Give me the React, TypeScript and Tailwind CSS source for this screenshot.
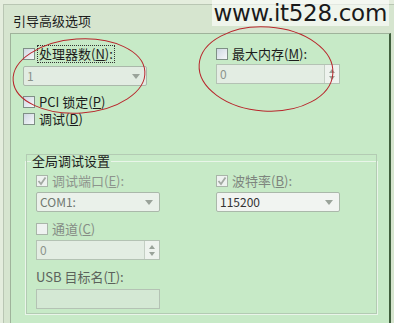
const font = { fontFamily: '"Noto Sans CJK SC", "Noto Sans", sans-serif' };

function Box({ checked, dim }: { checked?: boolean; dim?: boolean }) {
  return (
    <span
      className={`w-[12px] h-[12px] shrink-0 border flex items-center justify-center ${
        dim ? "border-[#a9b5a9] bg-[#eef2f0]" : "border-[#7f8f86] bg-gradient-to-br from-[#cfd8e2] to-[#f6f8fa]"
      }`}
    >
      {checked && (
        <svg width="10" height="10" viewBox="0 0 10 10">
          <path d="M1.5 5 L4 8 L8.5 1.5" stroke="#a3aaa3" strokeWidth="1.8" fill="none" />
        </svg>
      )}
    </span>
  );
}

function Check({ label, hot, tail, checked, dim, focus, color = "text-[#1c1c1c]" }: {
  label: string; hot: string; tail?: string; checked?: boolean; dim?: boolean; focus?: boolean; color?: string;
}) {
  return (
    <div className={`flex items-center h-[16px] gap-[3px] text-[13px] leading-[16px] ${color}`}>
      <Box checked={checked} dim={dim} />
      <span className={`px-[1px] ${focus ? "outline outline-1 outline-dotted outline-[#333]" : ""}`}>
        {label}(<u>{hot}</u>){tail}
      </span>
    </div>
  );
}

function Arrow() {
  return (
    <svg width="8" height="5" viewBox="0 0 8 5">
      <path d="M0 0 L8 0 L4 5 Z" fill="#9aa39a" />
    </svg>
  );
}

function Select({ value, bg, text }: { value: string; bg: string; text: string }) {
  return (
    <div className={`w-[124px] h-[20px] border border-[#aab8aa] rounded-[2px] flex items-center justify-between pl-[3px] pr-[6px] text-[12px] ${bg} ${text}`}>
      <span>{value}</span>
      <Arrow />
    </div>
  );
}

function Spin({ value }: { value: string }) {
  return (
    <div className="w-[124px] h-[20px] border border-[#b4c2b4] flex items-center justify-between bg-[#e3ede3] text-[12px] text-[#8c948c]">
      <span className="pl-[3px]">{value}</span>
      <div className="w-[15px] h-[18px] border-l border-[#c4cfc4] bg-[#eef3ee] flex flex-col items-center justify-center gap-[3px]">
        <svg width="6" height="4" viewBox="0 0 6 4"><path d="M0 4 L6 4 L3 0 Z" fill="#9aa39a" /></svg>
        <svg width="6" height="4" viewBox="0 0 6 4"><path d="M0 0 L6 0 L3 4 Z" fill="#9aa39a" /></svg>
      </div>
    </div>
  );
}

export default function App() {
  return (
    <div className="relative w-[394px] h-[323px] overflow-hidden bg-[#e4eddd]" style={font}>
      <div className="mt-[4px] ml-[3px] h-[330px] border-l border-t border-[#b9c6b3] bg-[#d6e5cf]">
        <div className="h-[28px] pl-[9px] pt-[8px] text-[13px] leading-[16px] text-[#1c1c1c]">引导高级选项</div>
        <div className="ml-[6px] w-[381px] h-[300px] border-t border-l border-[#9fb39b] border-r-2 border-r-[#3f5e3c] bg-[#c7eac7] pl-[12px] pt-[12px]">
          <div className="grid grid-cols-[193px_1fr]">
            <div className="flex flex-col">
              <Check label="处理器数" hot="N" tail=":" focus />
              <div className="mt-[4px]"><Select value="1" bg="bg-[#e2ece2]" text="text-[#8a928a]" /></div>
              <div className="mt-[8px]"><Check label="PCI 锁定" hot="P" /></div>
              <div className="mt-[1px]"><Check label="调试" hot="D" /></div>
            </div>
            <div className="flex flex-col">
              <Check label="最大内存" hot="M" tail=":" />
              <div className="mt-[2px]"><Spin value="0" /></div>
            </div>
          </div>

          <fieldset className="mt-[26px] ml-[2px] w-[353px] border border-[#e9f5e9] outline outline-1 outline-[#b3cbb3] -outline-offset-2 px-[10px] pt-[4px] pb-[5px]">
            <legend className="-ml-[5px] px-[1px] text-[13px] leading-[16px] text-[#1c1c1c]">全局调试设置</legend>
            <div className="grid grid-cols-[180px_1fr]">
              <div className="flex flex-col">
                <Check label="调试端口" hot="E" tail=":" checked dim color="text-[#8d948d]" />
                <div className="mt-[3px]"><Select value="COM1:" bg="bg-[#eaf1ea]" text="text-[#707870]" /></div>
                <div className="mt-[9px]"><Check label="通道" hot="C" dim color="text-[#858c85]" /></div>
                <div className="mt-[3px]"><Spin value="0" /></div>
                <div className="mt-[9px] h-[16px] text-[13px] leading-[16px] text-[#5c625c]">USB 目标名(<u>T</u>):</div>
                <div className="mt-[4px] w-[124px] h-[20px] border border-[#b4c2b4] bg-[#d4e8d4]" />
              </div>
              <div className="flex flex-col">
                <Check label="波特率" hot="B" tail=":" checked dim color="text-[#7e857e]" />
                <div className="mt-[3px]"><Select value="115200" bg="bg-[#f1f4f1]" text="text-[#333]" /></div>
              </div>
            </div>
          </fieldset>
        </div>
      </div>

      <div className="absolute top-0 right-[5px] h-[26px] px-[2px] bg-white/60 text-[23px] leading-[26px] tracking-[-0.3px] text-[#1a1a1a]" style={{ fontFamily: '"DejaVu Sans", sans-serif' }}>
        www.it528.com
      </div>

      <svg className="absolute inset-0 pointer-events-none" width="394" height="323">
        <ellipse cx="79" cy="76" rx="66" ry="37" transform="rotate(-4 79 76)" fill="none" stroke="#b8252b" strokeWidth="1" />
        <ellipse cx="266" cy="69" rx="67" ry="42" transform="rotate(4 266 69)" fill="none" stroke="#b8252b" strokeWidth="1" />
      </svg>
    </div>
  );
}
